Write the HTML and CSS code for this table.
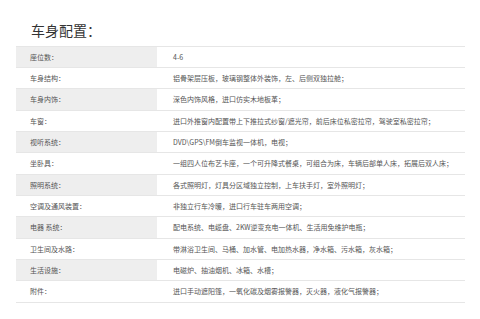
FILE: index.html
```html
<!DOCTYPE html>
<html lang="zh-CN">
<head>
<meta charset="utf-8">
<title>车身配置</title>
<link rel="stylesheet" href="styles.css">
</head>
<body>
<div class="page">
  <h2 class="title">车身配置：</h2>
  <div class="spec-table">
    <div class="row"><div class="label">座位数：</div><div class="value">4-6</div></div>
    <div class="row"><div class="label">车身结构：</div><div class="value">铝骨架层压板，玻璃钢整体外装饰，左、后侧双独拉舱；</div></div>
    <div class="row"><div class="label">车身内饰：</div><div class="value">深色内饰风格，进口仿实木地板革；</div></div>
    <div class="row"><div class="label">车窗：</div><div class="value">进口外推窗内配置带上下推拉式纱窗/遮光帘，前后床位私密拉帘，驾驶室私密拉帘；</div></div>
    <div class="row"><div class="label">视听系统：</div><div class="value">DVD\GPS\FM倒车监视一体机，电视；</div></div>
    <div class="row"><div class="label">坐卧具：</div><div class="value">一组四人位布艺卡座，一个可升降式餐桌，可组合为床，车辆后部单人床，拓展后双人床；</div></div>
    <div class="row"><div class="label">照明系统：</div><div class="value">各式照明灯，灯具分区域独立控制，上车扶手灯，室外照明灯；</div></div>
    <div class="row"><div class="label">空调及通风装置：</div><div class="value">非独立行车冷暖，进口行车驻车两用空调；</div></div>
    <div class="row"><div class="label">电器 系统：</div><div class="value">配电系统、电缆盘、2KW逆变充电一体机、生活用免维护电瓶；</div></div>
    <div class="row"><div class="label">卫生间及水路：</div><div class="value">带淋浴卫生间、马桶、加水管、电加热水器，净水箱、污水箱，灰水箱；</div></div>
    <div class="row"><div class="label">生活设施：</div><div class="value">电磁炉、抽油烟机、冰箱、水槽；</div></div>
    <div class="row"><div class="label">附件：</div><div class="value">进口手动遮阳篷，一氧化碳及烟雾报警器，灭火器，液化气报警器；</div></div>
  </div>
</div>
</body>
</html>
```

FILE: styles.css
```css
html, body {
  margin: 0;
  padding: 0;
  background: #ffffff;
}

body {
  font-family: "Noto Sans CJK SC", "Liberation Sans", sans-serif;
  color: #555555;
}

.page {
  padding: 20px 15px 0 16px;
}

.title {
  margin: 0 0 5.5px 0;
  padding-left: 15px;
  font-size: 14px;
  line-height: 20px;
  font-weight: normal;
  color: #333333;
}

.spec-table {
  border-top: 1px solid #e6e6e6;
}

.row {
  display: flex;
  box-sizing: border-box;
  height: 21.35px;
  border-bottom: 1px solid #e6e6e6;
  font-size: 7px;
  line-height: 20px;
}

.label {
  width: 127px;
  flex: none;
  padding-left: 14px;
  white-space: nowrap;
}

.row:nth-child(odd) .label {
  background: #eeeeee;
}

.value {
  flex: 1;
  padding-left: 16px;
  white-space: nowrap;
}
```
